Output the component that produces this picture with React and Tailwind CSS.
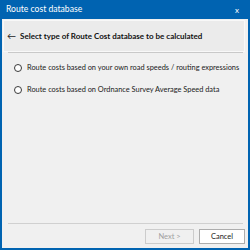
import React from 'react';

function Radio({ label }) {
    return (
        <label className="flex items-center h-[12px]">
            <span className="shrink-0 w-[8px] h-[8px] rounded-full border border-[#3a3a3a] bg-white" />
            <span className="ml-[5px] text-[7.4px] text-[#1a1a1a] whitespace-nowrap">{label}</span>
        </label>
    );
}

function App() {
    return (
        <div
            className="w-[250px] h-[250px] bg-[#0063b1] flex flex-col px-[2px] pb-[2px]"
            style={{ fontFamily: 'Lato, "Open Sans", sans-serif' }}
        >
            {/* Title bar */}
            <div className="h-[19px] flex items-center justify-between pl-[4px] pr-[9px] text-white">
                <span className="text-[8.6px]">Route cost database</span>
                <span className="text-[8px]">x</span>
            </div>

            {/* Body */}
            <div className="flex-1 bg-[#f0f0f0] flex flex-col">
                <div className="mt-[1px] ml-[1px] mr-[3px] h-[32px] border border-[#f8f8f8] bg-[#ebebeb] flex items-center pl-[3px]">
                    <span className="text-[9px] text-[#222222]">←</span>
                    <span className="ml-[4px] text-[8px] font-bold text-[#111111] whitespace-nowrap">
                        Select type of Route Cost database to be calculated
                    </span>
                </div>
                <div className="ml-[6px] mr-[5px] h-px bg-[#c9c9c9]" />

                <div className="flex flex-col pl-[12px] pt-[9px] gap-[10px]">
                    <Radio label="Route costs based on your own road speeds / routing expressions" />
                    <Radio label="Route costs based on Ordnance Survey Average Speed data" />
                </div>

                <div className="flex-1" />

                <div className="ml-[6px] mr-[5px] h-px bg-[#d0d0d0]" />
                <div className="flex justify-end items-center gap-[5px] pt-[5px] pb-[4px] pr-[3px]">
                    <button disabled className="w-[49px] h-[15px] border border-[#cccccc] bg-[#f0f0f0] text-[7.5px] text-[#a0a0a0]">
                        Next &gt;
                    </button>
                    <button className="w-[46px] h-[15px] border border-[#adadad] bg-white text-[7.5px] text-[#1a1a1a]">
                        Cancel
                    </button>
                </div>
            </div>
        </div>
    );
}

export default App;
